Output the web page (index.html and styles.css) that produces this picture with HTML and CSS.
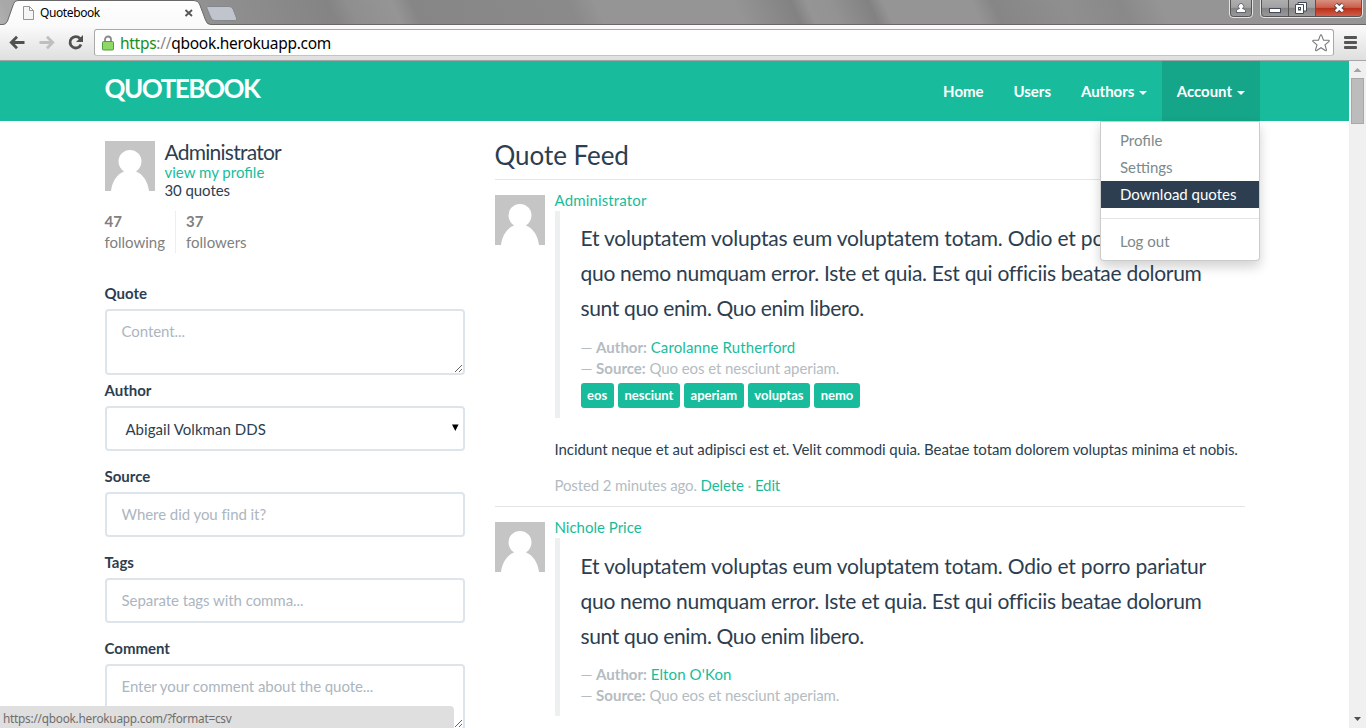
FILE: index.html
```html
<!DOCTYPE html>
<html lang="en">
<head>
<meta charset="utf-8">
<title>Quotebook</title>
<link rel="stylesheet" href="styles.css">
</head>
<body>
<svg class="defs" width="0" height="0">
  <symbol id="avatar" viewBox="0 0 50 50">
    <rect width="50" height="50" fill="#c5c5c5"/>
    <path d="M6 50C7 41 12 33 19 30.500C15.500 28 13.500 24 13.500 20.500a11.500 11.500 0 0 1 23 0C36.500 24 34.500 28 31 30.500C38 33 43 41 44 50z" fill="#fff"/>
  </symbol>
</svg>
<div class="window">
  <header class="chrome">
    <div class="titlebar">
      <svg class="frame" width="1366" height="25" viewBox="0 0 1366 25">
        <defs>
          <linearGradient id="tabfill" x1="0" y1="0" x2="0" y2="1"><stop offset="0" stop-color="#fff"/><stop offset="1" stop-color="#fafafa"/></linearGradient>
          <linearGradient id="btn" x1="0" y1="0" x2="0" y2="1"><stop offset="0" stop-color="#b0b0b0"/><stop offset=".45" stop-color="#a2a2a2"/><stop offset=".5" stop-color="#858585"/><stop offset="1" stop-color="#9c9c9c"/></linearGradient>
          <linearGradient id="close" x1="0" y1="0" x2="0" y2="1"><stop offset="0" stop-color="#d9907f"/><stop offset=".45" stop-color="#cb5f4b"/><stop offset=".5" stop-color="#b8301a"/><stop offset="1" stop-color="#d3604a"/></linearGradient>
        </defs>
        <path d="M0 24.500H1366" stroke="#6b6767"/>
        <path d="M207.500 6.500H229q3 0 4 2.500l3.500 9q.8 2.500-1.500 2.500H215q-3 0-4-2.500l-4-9.500q-.5-2 .5-2z" fill="#c0c5cd" stroke="#84878c"/>
        <path d="M0 24.500H3q3 0 4.500-3.500L13.500 4Q14.500.5 18 .5H194q4 0 5.500 3.500L205.500 20q1.500 4.500 5 4.500V25H0z" fill="url(#tabfill)"/>
        <path d="M0 24.500H3q3 0 4.500-3.500L13.500 4Q14.500.5 18 .5H194q4 0 5.500 3.500L205.500 20q1.500 4.500 5 4.500" fill="none" stroke="#696969"/>
        <path d="M23.500 6.500h6l4 4v9h-10zM29.500 6.500v4h4" fill="#f6f6f6" stroke="#969696"/>
        <path d="M185.500 10l6.500 6m0-6l-6.500 6" stroke="#555" stroke-width="1.800"/>
        <path d="M1229.500 -1V14q0 3.500 3.500 3.500h16q3.500 0 3.500-3.500V-1z" fill="url(#btn)" stroke="#e3e3e3"/>
        <path d="M1230.500 -1V13.500q0 3 3 3h15q3 0 3-3V-1" fill="none" stroke="#555"/>
        <path d="M1260.500 -1V14q0 3.500 3.500 3.500h95q3.500 0 3.500-3.500V-1z" fill="url(#btn)" stroke="#e3e3e3"/>
        <path d="M1315.500 0V16.500H1358.500q3 0 3-3V0z" fill="url(#close)"/>
        <path d="M1261.500 -1V13.500q0 3 3 3h94q3 0 3-3V-1M1288.500 0V16M1315.500 0V16" fill="none" stroke="#555"/>
        <g fill="#fff" stroke="#444a58">
          <path d="M1236.500 12.500v-2q1-1.500 3-2a2.700 2.700 0 1 1 3 0q2 .5 3 2v2z" stroke-width=".8"/>
          <rect x="1269.500" y="8.500" width="11" height="4"/>
          <path d="M1298 2.500h8.500v8.500h-8.500z"/>
          <path d="M1295.500 4.500h8v9h-8z"/><rect x="1298.500" y="7.500" width="2" height="2.500"/>
        </g>
        <path d="M1335.500 4.500l7.500 7m0-7l-7.500 7" stroke="#5b4450" stroke-width="4.800"/>
        <path d="M1335.800 4.800l7 6.400m0-6.400l-7 6.400" stroke="#fff" stroke-width="2.800"/>
      </svg>
      <span class="tab-title">Quotebook</span>
    </div>
    <div class="toolbar">
      <svg width="94" height="35" viewBox="0 0 94 35" fill="none">
        <path d="M11 17.500H24.500M17 11.800l-5.700 5.700 5.700 5.700" stroke="#505050" stroke-width="2.800"/>
        <path d="M39.500 17.500H52.500M47 11.800l5.700 5.700-5.700 5.700" stroke="#bfbfbf" stroke-width="2.800"/>
        <path d="M80 13.500A5.700 5.700 0 1 0 81 19.500" stroke="#505050" stroke-width="2.800"/><path d="M83 10v7h-7z" fill="#505050"/>
      </svg>
      <div class="omnibox">
        <svg class="lock" width="12" height="16" viewBox="0 0 12 16"><path d="M3 8V4.500a3 3 0 0 1 6 0V8" fill="none" stroke="#8a8a8a" stroke-width="1.800"/><rect x=".5" y="6.500" width="11" height="8.500" rx="1" fill="#8fd867" stroke="#4f9e37"/></svg>
        <span class="url"><span class="scheme">https</span><span class="sep">://</span>qbook.herokuapp.com</span>
        <svg class="star" width="20" height="20" viewBox="0 0 20 20"><path d="M10 1.800q.5 0 .8.800l1.700 4.500 4.900.2q1.500.3.400 1.400l-3.800 3.200 1.400 4.700q.2 1.500-1.100.9L10 14.700l-4.300 2.800q-1.300.6-1.100-.9L6 11.900 2.200 8.700q-1.100-1.100.4-1.400l4.900-.2 1.700-4.500q.3-.8.800-.8z" fill="#fff" stroke="#777" stroke-width="1.100"/></svg>
      </div>
      <div class="menu"><i></i><i></i><i></i></div>
    </div>
  </header>
  <div class="viewport">
    <div class="page">
      <nav class="navbar">
        <div class="container nav-inner">
          <a class="brand">QUOTEBOOK</a>
          <ul class="nav">
            <li><a>Home</a></li>
            <li><a>Users</a></li>
            <li><a>Authors<b class="caret"></b></a></li>
            <li class="open"><a>Account<b class="caret"></b></a>
              <ul class="dropdown">
                <li>Profile</li><li>Settings</li><li class="active">Download quotes</li><li class="divider"></li><li>Log out</li>
              </ul>
            </li>
          </ul>
        </div>
      </nav>
      <main class="container columns">
        <aside class="side">
          <section class="user">
            <svg width="50" height="50"><use href="#avatar"/></svg>
            <div><h1>Administrator</h1><a class="link">view my profile</a><span>30 quotes</span></div>
          </section>
          <section class="stats"><a><strong>47</strong>following</a><a><strong>37</strong>followers</a></section>
          <form>
            <label>Quote</label><textarea class="control area" placeholder="Content..."></textarea>
            <label>Author</label><div class="control select"><span>Abigail Volkman DDS</span><svg width="7" height="12"><path d="M0 .5h6.600L3.300 7z"/></svg></div>
            <label>Source</label><input class="control" placeholder="Where did you find it?">
            <label>Tags</label><input class="control" placeholder="Separate tags with comma...">
            <label>Comment</label><textarea class="control area" placeholder="Enter your comment about the quote..."></textarea>
          </form>
        </aside>
        <section class="feed">
          <h3>Quote Feed</h3>
          <article class="post">
            <svg width="50" height="50"><use href="#avatar"/></svg>
            <div class="body">
              <a class="link name">Administrator</a>
              <blockquote>
                <p>Et voluptatem voluptas eum voluptatem totam. Odio et porro pariatur<br><span class="snug">quo nemo numquam error. Iste et quia. Est qui officiis beatae dolorum</span><br><span class="tight">sunt quo enim. Quo enim libero.</span></p>
                <small>— <b>Author:</b> <a class="link">Carolanne Rutherford</a></small>
                <small>— <b>Source:</b> Quo eos et nesciunt aperiam.</small>
                <div class="tags"><span>eos</span><span>nesciunt</span><span>aperiam</span><span>voluptas</span><span>nemo</span></div>
              </blockquote>
              <p class="comment">Incidunt neque et aut adipisci est et. Velit commodi quia. Beatae totam dolorem voluptas minima et nobis.</p>
              <p class="time">Posted 2 minutes ago. <a class="link">Delete</a> · <a class="link">Edit</a></p>
            </div>
          </article>
          <article class="post">
            <svg width="50" height="50"><use href="#avatar"/></svg>
            <div class="body">
              <a class="link name plain">Nichole Price</a>
              <blockquote>
                <p>Et voluptatem voluptas eum voluptatem totam. Odio et porro pariatur<br><span class="snug">quo nemo numquam error. Iste et quia. Est qui officiis beatae dolorum</span><br><span class="tight">sunt quo enim. Quo enim libero.</span></p>
                <small>— <b>Author:</b> <a class="link">Elton O'Kon</a></small>
                <small>— <b>Source:</b> Quo eos et nesciunt aperiam.</small>
              </blockquote>
            </div>
          </article>
        </section>
      </main>
    </div>
    <div class="scrollbar">
      <svg width="17" height="17"><path d="M4.500 11h8L8.500 7z" fill="#a3a3a3"/></svg>
      <div class="thumb"></div>
      <svg class="down" width="17" height="17"><path d="M5 6h7L8.500 10z" fill="#505050"/></svg>
    </div>
  </div>
  <div class="status">https://qbook.herokuapp.com/?format=csv</div>
</div>
</body>
</html>
```
FILE: styles.css
```css
* { box-sizing: border-box; }
body { margin: 0; font: 15px/1.42857 Lato, sans-serif; color: #2c3e50; background: #fff; overflow: hidden; }
.defs { position: absolute; }
.window { position: relative; width: 1366px; height: 728px; overflow: hidden; display: flex; flex-direction: column; }
.chrome { height: 61px; flex: none; font-family: "Noto Sans", sans-serif; color: #000; }
.titlebar { position: relative; height: 25px; background: linear-gradient(66deg, #b0b0b0 0, #a8a8a8 1%, #8f8f8f 17%, #848484 24.5%, #8f8f8f 26%, #959595 29.2%, #868686 30.6%, #8a8a8a 42%, #959595 44%, #959595 54%, #828282 58.2%, #959595 59.3%, #939393 61%, #828282 63.8%, #959595 64.9%, #959595 71.3%, #868686 72.8%, #8f8f8f 78%, #898989 82%, #959595 85%, #959595 100%); }
.frame { position: absolute; left: 0; top: 0; }
.tab-title { position: relative; display: block; padding: 5px 0 0 40px; font-size: 12px; line-height: 16px; letter-spacing: -.4px; }
.toolbar { height: 36px; display: flex; background: linear-gradient(#fbfbfb, #dfdfdf); border-bottom: 1px solid #a5a5a5; }
.omnibox { width: 1240px; height: 27px; margin-top: 4px; border: 1px solid #a9a9a9; border-bottom-color: #c4c4c4; border-radius: 3px; background: #fff; display: flex; align-items: center; }
.lock { margin: 0 6px 0 7px; }
.url { font-size: 15.500px; flex: 1; line-height: 22px; letter-spacing: -.28px; }
.scheme { color: #189018; }
.sep { color: #888; }
.star { margin-right: 2px; }
.menu { width: 13px; margin: 11px 0 0 10px; display: flex; flex-direction: column; gap: 2px; }
.menu i { height: 3px; border-radius: 1px; background: #555; }
.viewport { flex: 1; min-height: 0; display: flex; }
.page { width: 1349px; overflow: hidden; }
.container { width: 1170px; margin: 0 auto; padding: 0 15px; }
.navbar { height: 60px; background: #18bc9c; }
.nav-inner { display: flex; justify-content: space-between; padding-right: 0; }
.brand { color: #fff; font-weight: 700; font-size: 26px; line-height: 54px; letter-spacing: -1.480px; }
ul { list-style: none; margin: 0; padding: 0; }
.nav { display: flex; font-weight: 700; color: #fff; }
.nav > li { position: relative; padding: 0 15px; height: 60px; line-height: 61px; }
.nav > li > a { display: flex; align-items: center; letter-spacing: -.03px; }
.nav > .open { background: #15a589; padding: 0 14.500px; }
.caret { border: 4px solid transparent; border-top-color: currentColor; border-bottom: 0; margin: 3px 0 0 5px; }
.dropdown { position: absolute; z-index: 2; right: 0; top: 60px; width: 160px; height: 140px; padding: 5px 0; background: #fff; border: 1px solid rgba(0,0,0,.2); border-radius: 0 0 4px 4px; box-shadow: 0 6px 12px rgba(0,0,0,.175); font-weight: 400; color: #7b8a8b; }
.dropdown li { height: 27.100px; line-height: 27px; padding: 0 19.500px; white-space: nowrap; }
.dropdown .active { background: #2c3e50; color: #fff; }
.dropdown .divider { height: 1px; margin: 9.500px 0; background: #e5e5e5; }
.columns { display: flex; gap: 30px; padding-top: 20px; }
.side { width: 360px; flex: none; }
.feed { width: 750px; flex: none; }
.link { color: #18bc9c; }
.user { display: flex; gap: 10px; height: 58px; }
.user h1 { font-size: 21px; line-height: 21px; font-weight: 400; letter-spacing: -.75px; margin: 0 0 3px; }
.user a, .user span { display: block; line-height: 15px; margin-bottom: 3px; }
.user span { letter-spacing: -.08px; }
.stats { display: flex; margin-top: 12px; color: #808080; }
.stats a { padding: 0 10px; line-height: 21px; }
.stats a:first-child { padding-left: 0; border-right: 1px solid #eee; }
.stats strong { display: block; }
form { margin-top: 30px; }
label { display: block; font-weight: 700; height: 21.400px; margin-bottom: 4.600px; }
.control { display: block; width: 360px; height: 45px; padding: 10px 15px; border: 2px solid #dce4ec; border-radius: 4px; background: #fff; color: #2c3e50; font: inherit; margin: 0 0 15px; }
.control::placeholder { color: #acb6c0; opacity: 1; letter-spacing: -.06px; }
.area { height: 66px; margin-bottom: 5px; overflow: hidden; }
.select { display: flex; justify-content: space-between; align-items: center; padding: 3px 4px 0 18.900px; letter-spacing: .06px; }
.feed h3 { margin: 0 0 15px; height: 39px; border-bottom: 1px solid #e5e5e5; font-size: 26px; line-height: 29px; font-weight: 400; letter-spacing: -.05px; }
.post { display: flex; gap: 10px; height: 312.300px; border-bottom: 1px solid #e5e5e5; margin-bottom: 15px; }
.post > svg { flex: none; }
.body { width: 690px; }
.name { display: block; height: 16px; line-height: 10px; letter-spacing: .15px; }
.plain { letter-spacing: 0; }
blockquote { margin: 0; padding: 9.400px 0 10.400px 21px; border-left: 5px solid #ecf0f1; font-size: 21px; }
blockquote p { margin: 0 0 11.300px; line-height: 35px; white-space: nowrap; letter-spacing: -.195px; }
.snug { letter-spacing: -.285px; }
.tight { letter-spacing: -.36px; }
blockquote small { display: block; font-size: 15px; line-height: 21px; color: #b4bcc2; letter-spacing: -.08px; }
blockquote small b { letter-spacing: 0; }
blockquote small .link { letter-spacing: .12px; }
.tags { display: flex; gap: 4px; margin-top: 4px; }
.tags span { height: 25px; line-height: 24px; padding: 0 6.600px; border-radius: 3px; background: #18bc9c; color: #fff; font-size: 13px; font-weight: 700; }
.comment { margin: 20.600px 0 15px; white-space: nowrap; letter-spacing: -.07px; }
.time { margin: 0; color: #b4bcc2; letter-spacing: -.13px; }
.scrollbar { width: 17px; background: #f0f0f0; display: flex; flex-direction: column; }
.thumb { width: 13px; height: 46px; margin: 0 2px; background: #bcbcbc; border: 1px solid #a8a8a8; }
.down { margin-top: auto; }
.status { position: absolute; z-index: 3; left: 0; bottom: 0; width: 454px; height: 22px; padding-left: 3px; background: #dfdfdf; border-top-right-radius: 4px; color: #6e6e6e; font: 11.800px/24px "Noto Sans", sans-serif; letter-spacing: -.24px; }
```
